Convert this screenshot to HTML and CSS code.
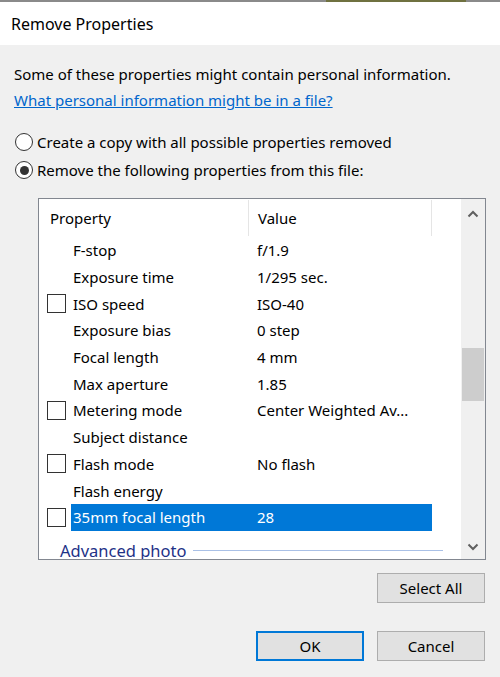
FILE: index.html
```html
<!DOCTYPE html>
<html>
<head>
<meta charset="utf-8">
<link rel="stylesheet" href="styles.css">
</head>
<body>
<div class="dialog">
  <div class="topline"></div>
  <div class="titlebar"><span class="title">Remove Properties</span></div>
  <div class="content">
    <div class="info">Some of these properties might contain personal information.</div>
    <div class="linkline"><a class="link" href="#">What personal information might be in a file?</a></div>
    <div class="radios">
      <div class="radio-row"><span class="radio"></span><span>Create a copy with all possible properties removed</span></div>
      <div class="radio-row"><span class="radio checked"><span class="dot"></span></span><span>Remove the following properties from this file:</span></div>
    </div>
    <div class="listbox">
      <div class="listmain">
        <div class="header">
          <div class="hcell hprop">Property</div>
          <div class="hcell hval">Value</div>
          <div class="hcell hrest"></div>
        </div>
        <div class="rows">
          <div class="row"><div class="cb-cell"></div><div class="name">F-stop</div><div class="val">f/1.9</div></div>
          <div class="row"><div class="cb-cell"></div><div class="name">Exposure time</div><div class="val">1/295 sec.</div></div>
          <div class="row"><div class="cb-cell"><span class="cb"></span></div><div class="name">ISO speed</div><div class="val">ISO-40</div></div>
          <div class="row"><div class="cb-cell"></div><div class="name">Exposure bias</div><div class="val">0 step</div></div>
          <div class="row"><div class="cb-cell"></div><div class="name">Focal length</div><div class="val">4 mm</div></div>
          <div class="row"><div class="cb-cell"></div><div class="name">Max aperture</div><div class="val">1.85</div></div>
          <div class="row"><div class="cb-cell"><span class="cb"></span></div><div class="name">Metering mode</div><div class="val">Center Weighted Av...</div></div>
          <div class="row"><div class="cb-cell"></div><div class="name">Subject distance</div><div class="val"></div></div>
          <div class="row"><div class="cb-cell"><span class="cb"></span></div><div class="name">Flash mode</div><div class="val">No flash</div></div>
          <div class="row"><div class="cb-cell"></div><div class="name">Flash energy</div><div class="val"></div></div>
          <div class="row selected"><div class="cb-cell"><span class="cb"></span></div><div class="name">35mm focal length</div><div class="val">28</div></div>
          <div class="group"><span class="group-label">Advanced photo</span><span class="group-line"></span></div>
        </div>
      </div>
      <div class="scrollbar">
        <svg class="arrow" width="12" height="8" viewBox="0 0 12 8"><path d="M1.5 6.5 L6 2 L10.5 6.5" fill="none" stroke="#606060" stroke-width="2"/></svg>
        <div class="thumb"></div>
        <svg class="arrow down" width="12" height="8" viewBox="0 0 12 8"><path d="M1.5 1.5 L6 6 L10.5 1.5" fill="none" stroke="#606060" stroke-width="2"/></svg>
      </div>
    </div>
    <div class="btnrow first"><button class="btn">Select All</button></div>
    <div class="btnrow second"><button class="btn default">OK</button><button class="btn">Cancel</button></div>
  </div>
</div>
</body>
</html>
```
FILE: styles.css
```css
html, body {
  margin: 0;
  padding: 0;
}
body {
  width: 500px;
  height: 677px;
  overflow: hidden;
  background: #f0f0f0;
  font-family: "Noto Sans", "Open Sans", sans-serif;
  font-size: 15px;
  color: #000;
}
.dialog {
  width: 500px;
  height: 677px;
  background: #f0f0f0;
}
.topline {
  height: 2px;
  background: linear-gradient(to right, #8a8a8a 0, #8a8a8a 326px, #6f7140 326px, #6f7140 466px, #8a8a8a 466px);
}
.titlebar {
  height: 43px;
  background: #fff;
  display: flex;
  align-items: center;
  padding-left: 11px;
}
.title {
  font-size: 16px;
  color: #000;
}
.content {
  padding: 16px 15px 0 14px;
}
.info, .linkline {
  line-height: 26px;
  height: 26px;
  white-space: nowrap;
}
.link {
  color: #0066cc;
  text-decoration: underline;
}
.radios {
  margin-top: 15px;
}
.radio-row {
  height: 28px;
  display: flex;
  align-items: center;
  gap: 4px;
  white-space: nowrap;
}
.radio {
  width: 16px;
  height: 16px;
  border: 1px solid #333;
  border-radius: 50%;
  background: #fff;
  display: flex;
  align-items: center;
  justify-content: center;
  margin-left: 1px;
}
.dot {
  width: 9px;
  height: 9px;
  border-radius: 50%;
  background: #333;
}
.listbox {
  margin-top: 14px;
  margin-left: 24px;
  width: 446px;
  height: 360px;
  border: 1px solid #828790;
  background: #fff;
  display: flex;
  overflow: hidden;
}
.listmain {
  width: 422px;
  overflow: hidden;
}
.header {
  height: 38px;
  display: flex;
}
.hcell {
  display: flex;
  align-items: center;
  height: 36px;
  margin-top: 1px;
}
.hprop {
  width: 198px;
  padding-left: 11px;
  border-right: 1px solid #e5e5e5;
}
.hval {
  width: 173px;
  padding-left: 9px;
  border-right: 1px solid #e5e5e5;
}
.hrest {
  flex: 1;
}
.row {
  height: 26.7px;
  display: flex;
  align-items: stretch;
}
.cb-cell {
  width: 32px;
  display: flex;
  align-items: center;
  padding-left: 8px;
  box-sizing: border-box;
}
.cb {
  width: 17px;
  height: 17px;
  border: 1px solid #333;
  background: #fff;
  display: block;
}
.name {
  width: 175px;
  padding-left: 2px;
  display: flex;
  align-items: center;
  white-space: nowrap;
}
.val {
  width: 175px;
  padding-left: 9px;
  display: flex;
  align-items: center;
  white-space: nowrap;
}
.row.selected .name, .row.selected .val {
  background: #0078d7;
  color: #fff;
}
.group {
  height: 30px;
  display: flex;
  align-items: center;
  padding-left: 21px;
  padding-top: 5px;
}
.group-label {
  color: #1e3287;
  font-size: 16.5px;
  white-space: nowrap;
}
.group-line {
  flex: 1;
  height: 1px;
  background: #a9c0e6;
  margin-left: 7px;
  margin-right: 18px;
}
.scrollbar {
  width: 24px;
  background: #f0f0f0;
  display: flex;
  flex-direction: column;
  align-items: center;
}
.arrow {
  margin-top: 11px;
}
.thumb {
  width: 22px;
  height: 53px;
  background: #cdcdcd;
  margin-top: 130px;
}
.arrow.down {
  margin-top: auto;
  margin-bottom: 8px;
}
.btnrow {
  display: flex;
  justify-content: flex-end;
  gap: 13px;
}
.btnrow.first {
  margin-top: 13px;
}
.btnrow.second {
  margin-top: 28px;
}
.btn {
  width: 108px;
  height: 30px;
  background: #e1e1e1;
  border: 1px solid #adadad;
  font-family: "Noto Sans", "Open Sans", sans-serif;
  font-size: 15px;
  color: #000;
  padding: 0;
}
.btn.default {
  border: 2px solid #0078d7;
}
```
